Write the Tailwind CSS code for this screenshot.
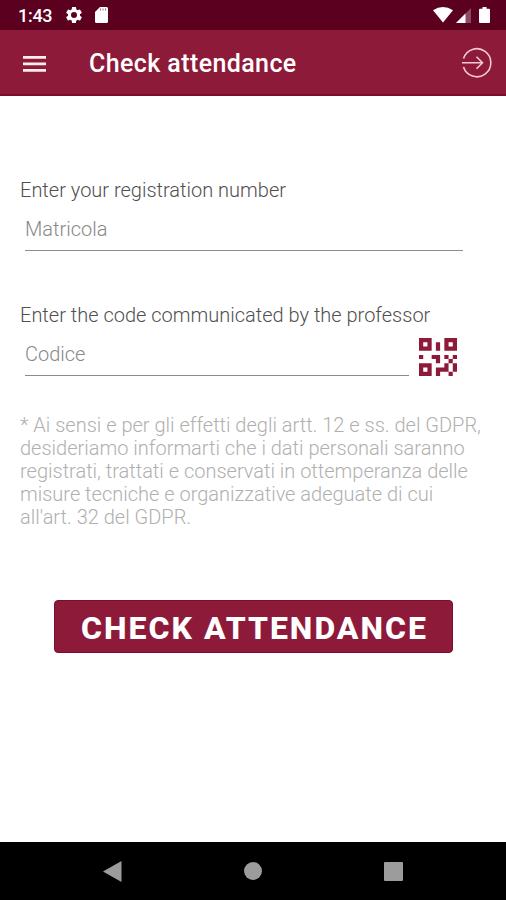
<!DOCTYPE html>
<html lang="en">

<head>
    <meta charset="UTF-8">
    <meta name="viewport" content="width=device-width, initial-scale=1.0">
    <title>Check attendance</title>
    <script src="https://cdn.jsdelivr.net/npm/@tailwindcss/browser@4"></script>
</head>

<body class="bg-white font-['Roboto',sans-serif]">
<div class="w-[506px] h-[900px] flex flex-col overflow-hidden">
    <!-- status bar -->
    <div class="h-[30px] shrink-0 bg-[#5c0020] flex items-center pl-[18px] pr-4 text-white">
        <span class="text-[18px] leading-none font-medium w-[46px] pt-px tracking-[-0.3px]">1:43</span>
        <svg class="w-5 h-5" viewBox="0 0 24 24" fill="currentColor">
            <path d="M19.14 12.94c.04-.3.06-.61.06-.94s-.02-.64-.07-.94l2.03-1.58a.49.49 0 0 0 .12-.61l-1.92-3.32a.49.49 0 0 0-.59-.22l-2.39.96a7 7 0 0 0-1.62-.94l-.36-2.54a.48.48 0 0 0-.48-.41h-3.84a.47.47 0 0 0-.47.41l-.36 2.54c-.59.24-1.13.57-1.62.94l-2.39-.96a.48.48 0 0 0-.59.22L2.74 8.87a.47.47 0 0 0 .12.61l2.03 1.58a6 6 0 0 0-.02 1.88l-2.03 1.58a.49.49 0 0 0-.12.61l1.92 3.32c.12.22.37.29.59.22l2.39-.96c.5.38 1.03.7 1.62.94l.36 2.54c.05.24.24.41.48.41h3.84c.24 0 .44-.17.47-.41l.36-2.54a7 7 0 0 0 1.62-.94l2.39.96c.22.08.47 0 .59-.22l1.92-3.32a.47.47 0 0 0-.12-.61zM12 15.6a3.6 3.6 0 1 1 0-7.2 3.6 3.6 0 0 1 0 7.2z"/>
        </svg>
        <svg class="w-[13px] h-4 ml-[11px]" viewBox="0 0 13 16">
            <path fill="currentColor" d="M5 0h6.500A1.500 1.500 0 0 1 13 1.500v13a1.500 1.500 0 0 1-1.500 1.500h-10A1.500 1.500 0 0 1 0 14.500V5z"/>
            <path stroke="#5c0020" stroke-opacity=".6" d="M5.500 1.500v2M8 1.500v2M10.500 1.500v2"/>
        </svg>
        <svg class="w-5 h-4 ml-auto" viewBox="0 0 20 16" fill="currentColor">
            <path d="M0 3.200Q10-3.200 20 3.200L10 15.500z"/>
        </svg>
        <svg class="w-[15px] h-[15px] ml-[3px]" viewBox="0 0 15 15">
            <path fill="#8a4a62" d="M15 0v15H0z"/>
            <path fill="currentColor" d="M9.500 5.500V15H0z"/>
        </svg>
        <svg class="w-[11px] h-4 ml-2" viewBox="0 0 11 16" fill="currentColor">
            <path d="M3.500 0h4v1.700H10a1 1 0 0 1 1 1V15a1 1 0 0 1-1 1H1a1 1 0 0 1-1-1V2.700a1 1 0 0 1 1-1h2.500z"/>
        </svg>
    </div>

    <!-- app bar -->
    <div class="h-[66px] shrink-0 bg-[#8e1a3a] border-b-2 border-[#7d0c30] flex items-center pl-[23px] pr-[14px] text-white">
        <svg class="w-6 h-4 mt-[3px]" viewBox="0 0 24 16" fill="#fdeee8">
            <path d="M0 0h23v2.700H0zM0 6.500h23v2.700H0zM0 13h23v2.700H0z"/>
        </svg>
        <h1 class="ml-[42px] mt-[3px] text-[25px] leading-none font-medium tracking-[0.4px]">Check attendance</h1>
        <svg class="w-[31px] h-[31px] ml-auto" viewBox="0 0 31 31" fill="none" stroke="#f3c9d3" stroke-width="1.600">
            <path d="M2.500 11.500A14 14 0 1 1 2.500 20M1 15.800h20M15.500 9.800l6 6-6 6"/>
        </svg>
    </div>

    <!-- form -->
    <div class="grow pt-[82px] px-5 font-light text-[#505050]">
        <label class="block text-[20px] leading-6">Enter your registration number</label>
        <div class="ml-[5px] mt-[7px] w-[438px] h-[42px] border-b border-[#8c8c8c] pt-2 text-[20px] leading-6 text-[#888888]">Matricola</div>

        <label class="block mt-[52px] text-[20px] leading-6">Enter the code communicated by the professor</label>
        <div class="flex">
            <div class="ml-[5px] mt-[7px] w-[384px] h-[42px] border-b border-[#8c8c8c] pt-2 text-[20px] leading-6 text-[#888888]">Codice</div>
            <svg class="w-[38px] h-[38px] ml-[10px] mt-[11px]" viewBox="0 0 9 9" fill="#8e1a3a">
                <path fill-rule="evenodd" d="M0 0h3v3H0zM1 1v1h1V1zM6 0h3v3H6zM7 1v1h1V1zM0 6h3v3H0zM1 7v1h1V7z"/>
                <path d="M4 1h1v2H4zM0 4h1v1H0zM3 4h2v2H4V5H3zM6 4h1v1H6zM8 4h1v1H8zM7 5h1v1H7zM6 6h1v2H5v1H4V7h2zM8 6h1v2H8zM7 8h1v1H7z"/>
            </svg>
        </div>

        <p class="mt-[38px] text-[20px] leading-[23px] text-[#b0b0b0] whitespace-nowrap">
            * Ai sensi e per gli effetti degli artt. 12 e ss. del GDPR,<br>
            desideriamo informarti che i dati personali saranno<br>
            registrati, trattati e conservati in ottemperanza delle<br>
            misure tecniche e organizzative adeguate di cui<br>
            all'art. 32 del GDPR.
        </p>

        <button class="block ml-[34px] mt-[71px] w-[399px] h-[53px] rounded bg-[#8e1a3a] border border-[#7d0c30] pl-[2px] pt-[2px] text-white text-[32px] leading-none font-extrabold tracking-[2px] whitespace-nowrap">CHECK ATTENDANCE</button>
    </div>

    <!-- navigation bar -->
    <div class="h-[58px] shrink-0 bg-black flex items-center text-[#9c9c9c]">
        <svg class="w-[19px] h-[21px] ml-[103px]" viewBox="0 0 19 21" fill="currentColor"><path d="M18.500 0v21L0 10.500z"/></svg>
        <div class="w-[18px] h-[18px] ml-[122px] rounded-full bg-[#9c9c9c]"></div>
        <div class="w-[19px] h-[19px] ml-[122px] rounded-[1px] bg-[#9c9c9c]"></div>
    </div>
</div>
</body>

</html>
